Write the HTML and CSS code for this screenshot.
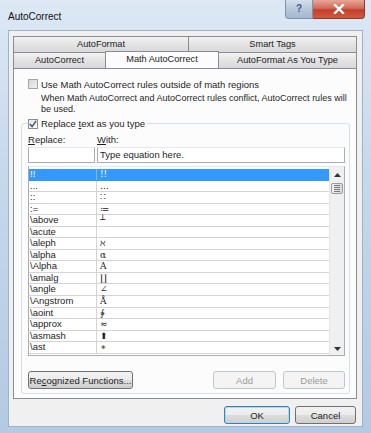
FILE: index.html
```html
<!DOCTYPE html>
<html lang="en">
<head>
  <meta charset="UTF-8" />
  <title>AutoCorrect</title>
  <link rel="stylesheet" href="styles.css">
</head>
<body>
  <div class="window">
    <div class="titlebar">
      <span class="title">AutoCorrect</span>
      <div class="caption-btns">
        <span class="btn-help">?</span>
        <span class="btn-close">
          <svg width="12" height="10" viewBox="0 0 12 10"><path d="M2 1 L10 9 M10 1 L2 9" stroke="#fff" stroke-width="2.4" stroke-linecap="square"/></svg>
        </span>
      </div>
    </div>

    <div class="client">
      <div class="tabs">
        <div class="tab-row">
          <div class="tab w-af">AutoFormat</div>
          <div class="tab w-st">Smart Tags</div>
        </div>
        <div class="tab-row">
          <div class="tab w-ac">AutoCorrect</div>
          <div class="tab active w-mac">Math AutoCorrect</div>
          <div class="tab w-afyt">AutoFormat As You Type</div>
        </div>
      </div>

      <div class="panel">
        <div class="check-row">
          <span class="checkbox"></span>
          <span>Use Math AutoCorrect rules outside of math regions</span>
        </div>
        <p class="note">When Math AutoCorrect and AutoCorrect rules conflict, AutoCorrect rules will<br>be used.</p>

        <fieldset class="group">
          <legend>
            <span class="checkbox checked">
              <svg width="8" height="8" viewBox="0 0 9 9"><path d="M1 4.5 L3.5 7.5 L8 1" fill="none" stroke="#3b4a7a" stroke-width="1.6"/></svg>
            </span>
            <span>Replace <u>t</u>ext as you type</span>
          </legend>

          <div class="field-labels">
            <span class="lbl-replace"><u>R</u>eplace:</span>
            <span><u>W</u>ith:</span>
          </div>
          <div class="inputs">
            <div class="input inp-replace"></div>
            <div class="input inp-with">Type equation here.</div>
          </div>

          <div class="list">
            <div class="rows">
              <div class="row selected"><span class="c1">!!</span><span class="c2">!!</span></div>
              <div class="row"><span class="c1">...</span><span class="c2">…</span></div>
              <div class="row"><span class="c1">::</span><span class="c2">∷</span></div>
              <div class="row"><span class="c1">:=</span><span class="c2">≔</span></div>
              <div class="row"><span class="c1">\above</span><span class="c2">┴</span></div>
              <div class="row"><span class="c1">\acute</span><span class="c2"></span></div>
              <div class="row"><span class="c1">\aleph</span><span class="c2">ℵ</span></div>
              <div class="row"><span class="c1">\alpha</span><span class="c2">α</span></div>
              <div class="row"><span class="c1">\Alpha</span><span class="c2">Α</span></div>
              <div class="row"><span class="c1">\amalg</span><span class="c2">∐</span></div>
              <div class="row"><span class="c1">\angle</span><span class="c2">∠</span></div>
              <div class="row"><span class="c1">\Angstrom</span><span class="c2">Å</span></div>
              <div class="row"><span class="c1">\aoint</span><span class="c2">∳</span></div>
              <div class="row"><span class="c1">\approx</span><span class="c2">≈</span></div>
              <div class="row"><span class="c1">\asmash</span><span class="c2">⬆</span></div>
              <div class="row"><span class="c1">\ast</span><span class="c2">∗</span></div>
            </div>
            <div class="scrollbar">
              <span class="sb-arrow">
                <svg width="7" height="4" viewBox="0 0 7 4"><path d="M0 4 L3.5 0 L7 4 Z" fill="#333"/></svg>
              </span>
              <span class="sb-thumb"><i></i><i></i><i></i><i></i></span>
              <span class="sb-track"></span>
              <span class="sb-arrow">
                <svg width="7" height="4" viewBox="0 0 7 4"><path d="M0 0 L3.5 4 L7 0 Z" fill="#333"/></svg>
              </span>
            </div>
          </div>

          <div class="group-btns">
            <button class="btn btn-funcs">Re<u>c</u>ognized Functions...</button>
            <span class="spacer"></span>
            <button class="btn btn-add disabled">Add</button>
            <button class="btn btn-del disabled">Delete</button>
          </div>
        </fieldset>
      </div>

      <div class="dialog-btns">
        <button class="btn btn-ok">OK</button>
        <button class="btn btn-cancel">Cancel</button>
      </div>
    </div>
  </div>
</body>
</html>
```

FILE: styles.css
```css
body {
  margin: 0;
  padding: 0;
  font-family: "Liberation Sans", Arial, sans-serif;
  font-size: 9.5px;
  color: #1e1e1e;
}
.window {
  width: 371px;
  height: 433px;
  box-sizing: border-box;
  padding: 0 8px 6px 8px;
  background: linear-gradient(180deg, #dde8f4 0%, #c6d8ec 40%, #b4c9e3 100%);
  display: flex;
  flex-direction: column;
  overflow: hidden;
}
.titlebar {
  height: 30px;
  flex-shrink: 0;
  display: flex;
  justify-content: space-between;
  align-items: flex-start;
}
.title {
  font-size: 10px;
  color: #111;
  padding-top: 11px;
}
.caption-btns {
  display: flex;
  margin-right: -2px;
}
.btn-help {
  width: 28px;
  height: 19px;
  box-sizing: border-box;
  border: 1px solid #7f93ad;
  border-top: none;
  border-radius: 0 0 0 4px;
  background: linear-gradient(180deg, #d4dfec 0%, #b7c7db 50%, #a6b8cf 100%);
  color: #4a5a70;
  font-size: 10px;
  font-weight: bold;
  text-align: center;
  line-height: 18px;
}
.btn-close {
  width: 52px;
  height: 19px;
  box-sizing: border-box;
  border: 1px solid #8b3a32;
  border-top: none;
  border-left: none;
  border-radius: 0 0 4px 0;
  background: linear-gradient(180deg, #e8a597 0%, #d46b5a 45%, #c3402f 55%, #d05a3e 100%);
  display: flex;
  align-items: center;
  justify-content: center;
}
.client {
  flex: 1;
  min-height: 0;
  background: #f0f0f0;
  border: 1px solid #9fb2c8;
  padding: 5px 5px 0 4px;
  display: flex;
  flex-direction: column;
}
.tabs {
  width: 344px;
}
.tab-row {
  display: flex;
  height: 16px;
}
.tab {
  box-sizing: border-box;
  border: 1px solid #898c95;
  border-bottom: none;
  margin-right: -1px;
  background: linear-gradient(180deg, #f2f2f2 0%, #e3e3e3 50%, #d9d9d9 100%);
  text-align: center;
  line-height: 14px;
  font-size: 9.2px;
  color: #222;
}
.tab.active {
  background: #fcfcfc;
  height: 17px;
  margin-top: -1px;
  position: relative;
  z-index: 1;
}
.w-af { width: 176px; }
.w-st { width: 169px; }
.w-ac { width: 93px; }
.w-mac { width: 114px; }
.w-afyt { width: 139px; }
.panel {
  width: 344px;
  height: 331px;
  flex-shrink: 0;
  box-sizing: border-box;
  border: 1px solid #898c95;
  background: #fcfcfc;
  padding: 9px 6px 0 7px;
}
.check-row {
  display: flex;
  align-items: center;
  gap: 3px;
  padding-left: 7px;
  height: 12px;
}
.checkbox {
  display: inline-flex;
  align-items: center;
  justify-content: center;
  width: 10px;
  height: 10px;
  box-sizing: border-box;
  border: 1px solid #a4a4a4;
  background: linear-gradient(135deg, #d6d6d6 0%, #f2f2f2 100%);
  flex-shrink: 0;
}
.checkbox.checked {
  border-color: #8f8f8f;
  background: linear-gradient(135deg, #e4e4e4 0%, #ffffff 100%);
}
.note {
  margin: 3px 0 0 0;
  padding-left: 20px;
  line-height: 11px;
  font-size: 9px;
  white-space: nowrap;
}
.group {
  margin: 2px 0 0 0;
  padding: 0 4px 6px 6px;
  border: 1px solid #d5dfe5;
  border-radius: 3px;
  height: 277px;
  box-sizing: border-box;
  min-width: 0;
}
.group legend {
  display: flex;
  align-items: center;
  gap: 3px;
  padding: 0 2px 0 0;
  margin-left: 0;
  height: 13px;
}
.field-labels {
  display: flex;
  margin-top: 3px;
  line-height: 13px;
  height: 13px;
}
.lbl-replace {
  width: 69px;
}
.inputs {
  display: flex;
  gap: 2px;
  margin-top: 1px;
}
.input {
  height: 16px;
  box-sizing: border-box;
  border: 1px solid #abadb3;
  border-top-color: #e3e9ef;
  background: #fff;
  line-height: 14px;
  padding-left: 2px;
}
.inp-replace { width: 67px; }
.inp-with { width: 248px; }
.list {
  margin-top: 3px;
  width: 317px;
  height: 190px;
  box-sizing: border-box;
  border: 1px solid #abadb3;
  border-top-color: #e3e9ef;
  background: #fff;
  display: flex;
}
.rows {
  flex: 1;
  padding-top: 2px;
}
.row {
  display: flex;
  height: 11.56px;
  box-sizing: border-box;
  border-bottom: 1px solid #d4d4d4;
  line-height: 10px;
}
.row .c1 {
  width: 66px;
  border-right: 1px solid #d4d4d4;
  padding-left: 1px;
}
.row .c2 {
  flex: 1;
  padding-left: 3px;
  font-family: "DejaVu Serif", serif;
  font-size: 9px;
}
.row.selected {
  background: #3399ff;
  color: #fff;
  border-bottom-color: #3399ff;
}
.row.selected .c1 {
  border-right-color: #7fbcff;
}
.scrollbar {
  width: 14px;
  background: #f0f0f0;
  border-left: 1px solid #e6e6e6;
  display: flex;
  flex-direction: column;
  padding-top: 2px;
}
.sb-arrow {
  height: 12px;
  display: flex;
  align-items: center;
  justify-content: center;
}
.sb-thumb {
  height: 11px;
  margin: 2px 1px 0 1px;
  box-sizing: border-box;
  border: 1px solid #9a9a9a;
  border-radius: 2px;
  background: linear-gradient(90deg, #f3f3f3, #d9d9d9);
  display: flex;
  flex-direction: column;
  align-items: center;
  justify-content: center;
  gap: 1px;
}
.sb-thumb i {
  display: block;
  width: 6px;
  height: 1px;
  background: #777;
}
.sb-track {
  flex: 1;
}
.group-btns {
  display: flex;
  gap: 7px;
  margin-top: 15px;
}
.spacer {
  flex: 1;
}
.btn {
  height: 18px;
  box-sizing: border-box;
  border: 1px solid #707070;
  border-radius: 3px;
  background: linear-gradient(180deg, #f2f2f2 0%, #ebebeb 50%, #dddddd 51%, #cfcfcf 100%);
  font-family: "Liberation Sans", Arial, sans-serif;
  font-size: 9.5px;
  color: #1e1e1e;
  padding: 0;
  white-space: nowrap;
}
.btn-funcs { width: 105px; }
.btn-add { width: 63px; }
.btn-del { width: 62px; }
.btn.disabled {
  border-color: #c3c6c9;
  background: #f4f4f4;
  color: #9a9a9a;
}
.dialog-btns {
  display: flex;
  justify-content: flex-end;
  gap: 5px;
  margin-top: 7px;
  padding-right: 1px;
}
.btn-ok {
  width: 66px;
  border-color: #3c7fb1;
  box-shadow: inset 0 0 0 1px #a6dcf5;
}
.btn-cancel { width: 61px; }
```
